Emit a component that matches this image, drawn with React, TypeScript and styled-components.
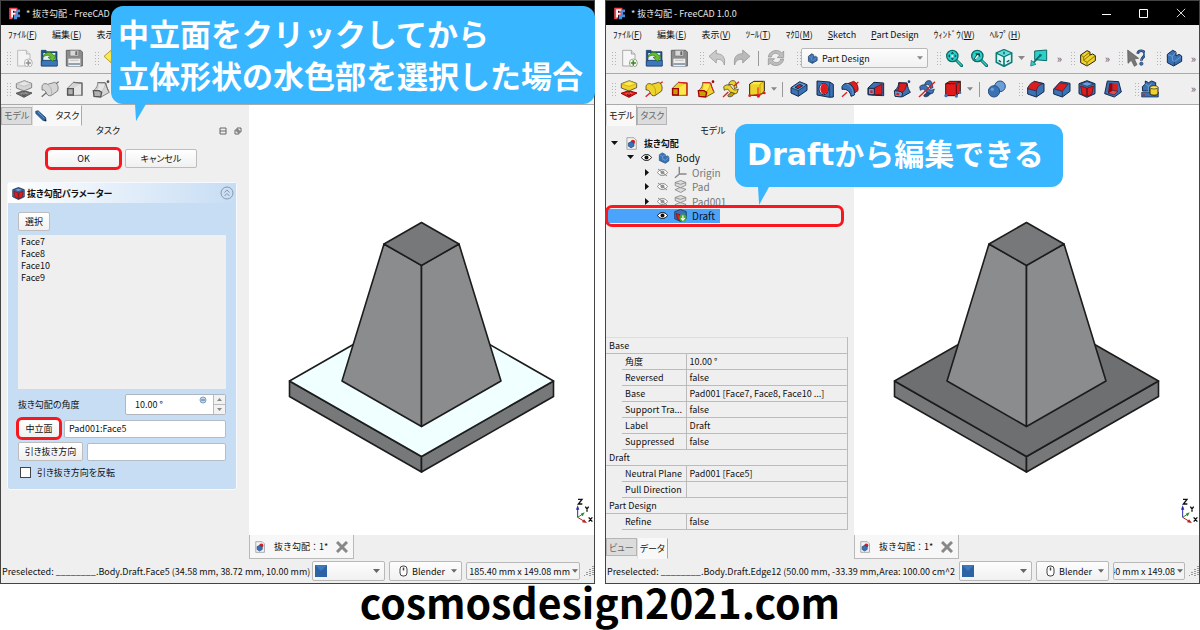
import React from "react";
import styled, { createGlobalStyle, css } from "styled-components";

const ui = '"Noto Sans CJK JP", "Noto Sans", sans-serif';

const Global = createGlobalStyle`
  *, *::before, *::after { box-sizing: border-box; }
  body { margin: 0; background: #fff; }
  button, input, select { font: inherit; color: inherit; }
  svg { display: block; flex: none; }
`;

/* ---------- page ---------- */

const Page = styled.main`
  display: flex;
  flex-direction: column;
  min-height: 100vh;
  font: 9px/13px ${ui};
  font-feature-settings: "palt";
  color: #111;
`;

const Comparison = styled.div`
  flex: 1;
  display: grid;
  grid-template-columns: 1fr 1fr;
  gap: 10px;
`;

const Caption = styled.p`
  margin: 0;
  height: 46px;
  text-align: center;
  font: bold 41px/34px "Noto Sans CJK JP", sans-serif;
  color: #000;
`;

const Shot = styled.section`
  position: relative;
  min-width: 0;
  display: flex;
`;

const Window = styled.div`
  flex: 1;
  min-width: 0;
  display: flex;
  flex-direction: column;
  background: #efefef;
  border: 1px solid #444;
`;

/* ---------- title and menus ---------- */

const TitleBar = styled.header`
  display: flex;
  align-items: center;
  gap: 5px;
  height: 24px;
  padding: 0 0 0 7px;
  background: #000;
  color: #e4e4e4;
  white-space: pre;
`;

const WindowButtons = styled.div`
  margin-left: auto;
  display: flex;
`;

const WindowButton = styled.button`
  width: 37px;
  height: 24px;
  padding: 0;
  border: 0;
  background: none;
  display: grid;
  place-items: center;
`;

const MenuBar = styled.nav`
  display: flex;
  align-items: center;
  gap: 15px;
  height: 18px;
  padding-left: 7px;
  white-space: nowrap;
  overflow: hidden;
`;

const MenuItem = styled.button`
  padding: 0;
  border: 0;
  background: none;
`;

/* ---------- toolbars ---------- */

const ToolBar = styled.div`
  display: flex;
  align-items: center;
  gap: 8px;
  height: 31px;
  padding-left: 5px;
  border-bottom: 1px solid #aaa;
  overflow: hidden;
`;

const ToolGroup = styled.div`
  display: flex;
  align-items: center;
`;

const Grip = styled.span`
  width: 5px;
  height: 14px;
  background-image: radial-gradient(circle, #b4b4b4 1px, transparent 1px);
  background-size: 3px 3px;
`;

const IconSet = styled.div<{ $width: number }>`
  display: grid;
  grid-auto-flow: column;
  grid-auto-columns: 1fr;
  width: ${(p) => p.$width}px;
`;

const ToolButton = styled.button`
  display: grid;
  place-items: center;
  height: 26px;
  padding: 0;
  border: 0;
  background: none;
  &:disabled svg {
    filter: grayscale(1) opacity(0.75);
  }
`;

const Separator = styled.span<{ $width: number }>`
  width: ${(p) => p.$width}px;
  height: 15px;
  background: linear-gradient(#999, #999) center / 1px 100% no-repeat;
`;

const DropArrow = styled.button<{ $width?: number }>`
  width: ${(p) => p.$width ?? 8}px;
  height: 16px;
  padding: 0;
  border: 0;
  background: none;
  display: grid;
  place-items: center;
`;

const More = styled.button`
  width: 10px;
  padding: 0;
  border: 0;
  background: none;
  font-size: 11px;
  line-height: 12px;
  text-align: right;
  color: #555;
`;

const PushRight = styled.span`
  flex: 1;
`;

const Combo = styled.label<{ $width: number; $inset?: number }>`
  flex: none;
  display: flex;
  align-items: center;
  gap: 4px;
  width: ${(p) => p.$width}px;
  height: 20px;
  padding: 0 4px 0 ${(p) => p.$inset ?? 2}px;
  border: 1px solid #b8b8b8;
  border-radius: 2px;
  background: linear-gradient(#fdfdfd, #f1f1f1);
  select {
    flex: 1;
    min-width: 0;
    padding: 0;
    border: 0;
    outline: 0;
    background: none;
    appearance: none;
  }
`;

/* ---------- window body ---------- */

const Body = styled.div`
  flex: 1;
  display: flex;
`;

const SidePanel = styled.aside`
  flex: none;
  width: 248px;
  display: flex;
  flex-direction: column;
`;

const Tabs = styled.div`
  display: flex;
  align-items: center;
  height: 21px;
`;

const Tab = styled.button<{ $active?: boolean }>`
  display: flex;
  align-items: center;
  gap: 8px;
  height: 18px;
  padding: 0 2px;
  border: 1px solid #b5b5b5;
  background: #dcdcdc;
  color: #666;
  ${(p) =>
    p.$active &&
    css`
      height: 21px;
      border-color: #f8f8f8 #aaa #f8f8f8 #ddd;
      background: #f8f8f8;
      color: #111;
    `}
`;

const DockTitle = styled.div`
  display: flex;
  align-items: center;
  height: 10px;
  line-height: 10px;
  > span {
    width: 214px;
    text-align: center;
  }
`;

const DockTools = styled.div`
  display: flex;
  gap: 7px;
  padding-left: 4px;
`;

const marked = css`
  position: relative;
  &::after {
    content: "";
    position: absolute;
    inset: -3px;
    border: 3px solid #f8171f;
    border-radius: 6px;
  }
`;

const Button = styled.button<{ $width: number; $marked?: boolean }>`
  flex: none;
  width: ${(p) => p.$width}px;
  height: 19px;
  padding: 0;
  border: 1px solid #bdbdbd;
  border-radius: 2px;
  background: linear-gradient(#fff, #f0f0f0);
  line-height: 16px;
  ${(p) => p.$marked && marked}
`;

const DialogButtons = styled.div`
  display: flex;
  gap: 5px;
  margin: 13px 0 14px 46px;
`;

const TaskBox = styled.section`
  width: 230px;
  margin-left: 6px;
  border: 1px solid #f6f9fd;
  border-radius: 3px;
  background: #c7ddf4;
`;

const TaskHeader = styled.h2`
  display: flex;
  align-items: center;
  gap: 2px;
  height: 20px;
  margin: 0;
  padding: 0 2px 0 4px;
  background: linear-gradient(90deg, #fff, #c7ddf4);
  font-size: 9px;
  line-height: 13px;
  button {
    margin-left: auto;
    padding: 0;
    border: 0;
    background: none;
  }
`;

const TaskForm = styled.div`
  display: flex;
  flex-direction: column;
  align-items: stretch;
  gap: 4px;
  padding: 9px 10px 10px;
`;

const FaceList = styled.ul`
  height: 154px;
  margin: 0 0 1px;
  padding: 1px 3px;
  list-style: none;
  line-height: 12px;
  background: #efefef;
`;

const Field = styled.div`
  display: flex;
  align-items: center;
  gap: 4px;
  > label:first-child {
    flex: 1;
  }
`;

const TextInput = styled.input`
  flex: 1;
  min-width: 0;
  height: 18px;
  padding: 0 4px;
  border: 1px solid #b4bcc6;
  border-radius: 2px;
  background: #fff;
`;

const SpinBox = styled.div`
  display: flex;
  width: 101px;
  height: 21px;
  border: 1px solid #b0b6be;
  border-radius: 2px;
  background: #fff;
  input {
    flex: 1;
    min-width: 0;
    padding: 0 0 0 9px;
    border: 0;
    background: none;
  }
`;

const Steps = styled.div`
  display: grid;
  width: 12px;
  margin-left: 6px;
  border-left: 1px solid #bbb;
  background: #f2f2f2;
  button {
    display: grid;
    place-items: center;
    padding: 0;
    border: 0;
    background: none;
  }
  button + button {
    border-top: 1px solid #bbb;
  }
`;

const CheckRow = styled.label`
  display: flex;
  align-items: center;
  gap: 6px;
  height: 14px;
  padding-left: 2px;
  input {
    appearance: none;
    width: 11px;
    height: 11px;
    margin: 0;
    border: 1px solid #444;
    background: #fff;
  }
`;

/* ---------- model tree ---------- */

const Tree = styled.ul`
  display: grid;
  grid-template-rows: repeat(6, 1fr);
  height: 87px;
  margin: 0;
  padding: 0;
  list-style: none;
`;

const TreeRow = styled.li<{ $depth: number; $dim?: boolean; $selected?: boolean }>`
  display: flex;
  align-items: center;
  gap: 6px;
  padding-left: ${(p) => 3 + p.$depth * 16}px;
  font-size: 10px;
  color: ${(p) => (p.$dim ? "#777" : "#111")};
  ${(p) =>
    p.$depth === 0 &&
    css`
      font-size: 9px;
      font-weight: bold;
    `}
  ${(p) =>
    p.$selected &&
    css`
      position: relative;
      background: linear-gradient(#4ba3fb, #4ba3fb) left / 114px 100% no-repeat;
      &::after {
        content: "";
        position: absolute;
        inset: -4px 10px -4px -1px;
        border: 3px solid #f8171f;
        border-radius: 7px;
      }
    `}
`;

const TreeSlot = styled.span<{ $width: number }>`
  display: grid;
  place-items: center;
  width: ${(p) => p.$width}px;
`;

const Properties = styled.table`
  width: 242px;
  margin-top: auto;
  border-collapse: collapse;
  border-right: 1px solid #bbb;
  border-top: 1px solid #ddd;
  table-layout: fixed;
  td, th {
    height: 16px;
    padding: 0 0 0 3px;
    border-bottom: 1px solid #bbb;
    font-weight: normal;
    text-align: left;
    line-height: 14px;
    white-space: nowrap;
  }
  td:first-child { border: 0; }
  td:last-child { border-left: 1px solid #bbb; }
`;

const BottomTabs = styled(Tabs)`
  margin-top: 8px;
  align-items: flex-start;
`;

/* ---------- 3D view ---------- */

const ViewArea = styled.div`
  flex: 1;
  min-width: 0;
  display: flex;
  flex-direction: column;
`;

const Viewport = styled.div`
  position: relative;
  flex: 1;
  display: grid;
  place-items: center;
  padding-top: 53px;
  background: #fff;
`;

const Axes = styled.svg`
  position: absolute;
  right: 1px;
  bottom: 9px;
`;

const DocTab = styled.div`
  display: flex;
  align-items: center;
  align-self: flex-start;
  gap: 8px;
  height: 24px;
  padding: 0 5px 0 4px;
  border: 1px solid #b9b9b9;
  border-top: 0;
  background: #f7f7f7;
  font-feature-settings: normal;
  button {
    padding: 0;
    border: 0;
    background: none;
  }
`;

const StatusBar = styled.footer`
  display: flex;
  align-items: center;
  gap: 4px;
  height: 24px;
  padding-left: 1px;
  white-space: nowrap;
`;

const StatusText = styled.span`
  flex: 1;
  min-width: 0;
  display: flex;
  justify-content: space-between;
`;

const SizeButton = styled.button<{ $width: number }>`
  flex: none;
  display: flex;
  align-items: center;
  justify-content: flex-end;
  gap: 2px;
  width: ${(p) => p.$width}px;
  height: 18px;
  padding: 0 1px 0 0;
  border: 1px solid #b8b8b8;
  border-radius: 2px;
  background: #f4f4f4;
  white-space: nowrap;
  span {
    display: flex;
    justify-content: flex-end;
    min-width: 0;
    overflow: hidden;
  }
`;

/* ---------- callouts ---------- */

const Callout = styled.div<{ $tail: number; $drop: number }>`
  position: absolute;
  z-index: 2;
  border-radius: 12px;
  background: #38b6ff;
  color: #fff;
  white-space: nowrap;
  font-feature-settings: normal;
  &::after {
    content: "";
    position: absolute;
    left: ${(p) => p.$tail}px;
    top: 100%;
    width: 11px;
    height: ${(p) => p.$drop}px;
    background: #38b6ff;
    clip-path: polygon(0 0, 100% 0, 10% 100%);
  }
`;

const SelectionCallout = styled(Callout)`
  left: 111px;
  right: 0;
  top: 6px;
  padding: 6px 7px 8px;
  font: bold 31px/42px ${ui};
`;

const EditCallout = styled(Callout)`
  left: 130px;
  top: 124px;
  padding: 9px 12px 11px;
  width: 328px;
  font: bold 30px/43px "DejaVu Sans", "Noto Sans CJK JP", sans-serif;
`;

/* ---------- icons ---------- */

const Y = "#edd32b";
const YL = "#fce94f";
const YD = "#c4a000";
const B = "#3b72b4";
const BL = "#6a9fd8";
const BD = "#204a87";
const R = "#e01b1b";
const RD = "#a40000";
const K = "#2a2118";

const art: Record<string, React.ReactNode> = {
  newDoc: (
    <>
      <path d="M8 4h26l11 11v36H8z" fill="#f6f6f6" stroke="#8a8a8a" strokeWidth="2" />
      <path d="M34 4v11h11" fill="#ddd" stroke="#8a8a8a" strokeWidth="2" />
      <circle cx="40" cy="42" r="12" fill="#fff" stroke="#6d7f62" strokeWidth="2" />
      <path d="M40 34v16M32 42h16" stroke="#3c8a1c" strokeWidth="5" />
    </>
  ),
  open: (
    <>
      <path d="M4 4h14l3 4h30v43H4z" fill="#1d4e86" stroke="#173b66" strokeWidth="2" />
      <path d="M10 12h36v22H10z" fill="#e8eef4" />
      <path d="M4 37l8-3h40v17H4z" fill="#3b78bb" stroke="#173b66" strokeWidth="2" />
      <path d="M7 27C13 7 34 5 40 19l8-1-9 20-15-13 8-1c-5-8-16-7-25 3z" fill="#63bf2d" stroke="#2d6d0c" strokeWidth="2" />
    </>
  ),
  save: (
    <>
      <path d="M4 4h43l5 5v42H4z" fill="#8d8d8d" stroke="#666" strokeWidth="3" />
      <path d="M15 4h26v17H15z" fill="#d8d8d8" stroke="#777" strokeWidth="2" />
      <path d="M31 7h6v11h-6z" fill="#666" />
      <path d="M10 29h36v22H10z" fill="#eee" />
      <path d="M10 42h36v6H10z" fill="#8fa3b8" />
      <path d="M15 34h26" stroke="#aaa" strokeWidth="2" />
    </>
  ),
  undo: <path d="M3 22L25 3v11c20 0 28 12 24 34-3-13-10-18-24-17v11z" fill="#c9c9c9" stroke="#8c8c8c" strokeWidth="2" />,
  undoOn: <path d="M3 22L25 3v11c20 0 28 12 24 34-3-13-10-18-24-17v11z" fill={YL} stroke="#8f7500" strokeWidth="2" />,
  redo: <path d="M51 22L29 3v11C9 14 1 26 5 48c3-13 10-18 24-17v11z" fill="#b9b9b9" stroke="#8c8c8c" strokeWidth="2" />,
  refresh: (
    <>
      <path d="M4 24C6 4 34-2 44 12l6-6v20H31l6-7C30 9 15 12 13 24z" fill="#bdbdbd" stroke="#8c8c8c" strokeWidth="2" />
      <path d="M50 30c-2 20-30 26-40 12l-6 6V29h19l-6 6c7 10 22 7 24-5z" fill="#bdbdbd" stroke="#8c8c8c" strokeWidth="2" />
    </>
  ),
  fitAll: (
    <>
      <path d="M33 33l17 17" stroke="#0b6b66" strokeWidth="9" strokeLinecap="round" />
      <path d="M34 34l15 15" stroke="#2ad0c9" strokeWidth="4" strokeLinecap="round" />
      <circle cx="22" cy="21" r="17" fill="#2ad0c9" stroke="#0b6b66" strokeWidth="4" />
      <path d="M22 8l5 6H17zM22 34l5-6H17zM9 21l6-5v10zM35 21l-6-5v10z" fill="#0c4644" />
      <circle cx="22" cy="21" r="3" fill="#fff" />
    </>
  ),
  fitSel: (
    <>
      <path d="M33 33l17 17" stroke="#0b6b66" strokeWidth="9" strokeLinecap="round" />
      <path d="M34 34l15 15" stroke="#2ad0c9" strokeWidth="4" strokeLinecap="round" />
      <circle cx="22" cy="21" r="17" fill="#2ad0c9" stroke="#0b6b66" strokeWidth="4" />
      <path d="M11 30l8-12-3-5h13l2 11-6-2-8 11z" fill="#0c4644" />
      <path d="M14 29l8-11 5 2-9 11z" fill="#e6fffd" />
    </>
  ),
  iso: (
    <>
      <path d="M27 2l23 10v28L27 52 4 40V12z" fill="#dff8f6" stroke="#0e7d78" strokeWidth="5" />
      <path d="M4 12l23 11 23-11M27 23v29" fill="none" stroke="#0e7d78" strokeWidth="5" />
      <path d="M27 4l20 8-20 9L8 12z" fill="#5fe0da" />
      <path d="M11 34l7 5M35 39l8-5M27 8v8" stroke="#0b5551" strokeWidth="4" />
    </>
  ),
  link: (
    <>
      <path d="M14 6l36-3v32l-36-3z" fill="#2ad0c9" stroke="#0b6b66" strokeWidth="3" />
      <path d="M30 20L8 44" stroke="#0b6b66" strokeWidth="5" />
      <path d="M2 51l2-17 14 12z" fill="#2ad0c9" stroke="#0b6b66" strokeWidth="2" />
      <circle cx="31" cy="19" r="4" fill="#0b6b66" />
    </>
  ),
  partYellow: (
    <>
      <path d="M5 18L24 5l9 4v9l8-3 8 5v15L24 51 5 41z" fill={Y} stroke={K} strokeWidth="3" />
      <path d="M5 18l9 6 19-15M14 24v10l10 6v11M24 40l25-20M14 34l19-16" fill="none" stroke="#8f7500" strokeWidth="3" />
    </>
  ),
  partBlue: (
    <>
      <path d="M7 16L23 4l10 5v12l9-5 8 5v16L26 51 7 41z" fill={B} stroke="#12294b" strokeWidth="3" />
      <path d="M9 17l13 5 10-12M22 22v12l6 4 20-15" fill="none" stroke={BL} strokeWidth="3" />
      <path d="M28 38v12" stroke="#12294b" strokeWidth="2" />
    </>
  ),
  help: (
    <>
      <path d="M32 14c2-12 22-12 21 2 0 9-10 9-10 19" fill="none" stroke="#1d3a66" strokeWidth="8" />
      <path d="M32 14c2-12 22-12 21 2 0 9-10 9-10 19" fill="none" stroke="#5a8dc8" strokeWidth="3" />
      <circle cx="43" cy="44" r="5" fill="#3b72b4" stroke="#1d3a66" strokeWidth="2" />
      <path d="M2 3l33 25-13 2 8 17-8 5-9-18-10 9z" fill="#777" stroke="#555" strokeWidth="2" />
    </>
  ),
  pad: (
    <>
      <path d="M3 40l23-8 25 7-24 13z" fill={R} stroke={RD} strokeWidth="3" />
      <path d="M16 41l11-4 11 3-11 6z" fill="#f3dede" />
      <path d="M27 30v13M20 40l7 8 7-8" fill="none" stroke={RD} strokeWidth="4" />
      <path d="M4 11L28 2l22 8v13L27 33 4 24z" fill={Y} stroke={K} strokeWidth="2" />
      <path d="M5 12L28 3l21 8-22 8z" fill={YL} stroke={YD} strokeWidth="2" />
    </>
  ),
  revolve: (
    <>
      <path d="M43 13l10-8" stroke={R} strokeWidth="4" />
      <path d="M3 19c2-9 11-10 17-6l21-6c8 3 13 13 9 26L30 47c-8 2-13-3-15-10-3-6-7-8-12-7z" fill={Y} stroke={K} strokeWidth="2" />
      <path d="M20 14c9 5 14 17 11 32" fill="none" stroke={YD} strokeWidth="3" />
      <path d="M2 50l14-12" stroke={R} strokeWidth="4" />
    </>
  ),
  loft: (
    <>
      <path d="M4 25L22 7l26 2v37H24l-20-1z" fill={Y} stroke={K} strokeWidth="2" />
      <path d="M22 25L45 11v31l-23 3z" fill={YL} />
      <path d="M22 7l26 2v38" fill="none" stroke={R} strokeWidth="4" />
      <path d="M5 26h17v19H5z" fill={YD} stroke={RD} strokeWidth="4" />
    </>
  ),
  pipe: (
    <>
      <path d="M7 30c7-7 10-13 10-22l25 1c2 14 6 22 10 28L29 50 7 47z" fill={Y} stroke={K} strokeWidth="2" />
      <path d="M18 9c1 12-1 20-8 25l18 2c8-9 11-17 12-26z" fill={YL} stroke={YD} strokeWidth="2" />
      <path d="M4 32h17l8 5-3 14-20-2z" fill={YD} stroke={RD} strokeWidth="4" />
      <path d="M17 8h22l11 26" fill="none" stroke={R} strokeWidth="3" />
      <circle cx="48" cy="5" r="4" fill={RD} />
    </>
  ),
  helix: (
    <>
      <path d="M5 20c9-9 20-6 24 2s12 10 20 5l-4 12c-10 6-19 1-23-6s-9-6-15-2z" fill={Y} stroke={K} strokeWidth="2" />
      <path d="M20 14c1-12 15-16 21-8l4 17-8 3c0-10-5-14-17-12z" fill={Y} stroke={K} strokeWidth="2" />
      <path d="M19 44c-8 8 14 10 18-4l-9-3z" fill={YD} stroke={K} strokeWidth="2" />
      <path d="M3 51l16-15M36 18L51 5" stroke={R} strokeWidth="4" />
    </>
  ),
  box: (
    <>
      <path d="M5 12L18 4h31v30L36 46H5z" fill={Y} stroke={K} strokeWidth="3" />
      <path d="M7 13L18 6h28l-10 7z" fill={YL} />
      <path d="M36 13v31M36 13l11-8" fill="none" stroke={YD} strokeWidth="3" />
      <path d="M30 22v22M6 47l22-3 20-4" fill="none" stroke={R} strokeWidth="3" />
      <circle cx="5" cy="47" r="4" fill={R} /><circle cx="31" cy="48" r="5" fill={R} /><circle cx="49" cy="39" r="4" fill={R} />
    </>
  ),
  pocket: (
    <>
      <path d="M3 23L29 5l22 9v17L25 49 3 39z" fill={B} stroke="#12294b" strokeWidth="3" />
      <path d="M3 23l22 9 26-18M25 32v17" fill="none" stroke="#12294b" strokeWidth="2" />
      <path d="M6 23L29 8l18 7-22 14z" fill={BL} />
      <path d="M15 22l14-9 9 4-14 9z" fill={R} stroke="#12294b" strokeWidth="3" />
    </>
  ),
  hole: (
    <>
      <path d="M3 3l38 3 11 7v38l-11 1-38-7z" fill={B} stroke="#12294b" strokeWidth="3" />
      <path d="M41 6v46" stroke="#12294b" strokeWidth="2" />
      <ellipse cx="23" cy="27" rx="14" ry="17" fill="#fff" stroke="#12294b" strokeWidth="3" />
      <path d="M25 10c-13 2-17 24-4 33 19 2 20-28 4-33z" fill={R} />
    </>
  ),
  groove: (
    <>
      <path d="M42 14l10-8" stroke={R} strokeWidth="4" />
      <path d="M22 10l16-6c10 4 15 16 13 28l-9 6z" fill={R} stroke="#6d0000" strokeWidth="2" />
      <path d="M3 20c3-9 13-12 23-8 11 7 17 20 14 33l-10 4c-2-14-12-23-27-21z" fill={B} stroke="#12294b" strokeWidth="3" />
      <path d="M17 12c13 5 20 17 19 33" fill="none" stroke={BL} strokeWidth="3" />
      <path d="M3 50l15-13" stroke={R} strokeWidth="4" />
    </>
  ),
  subLoft: (
    <>
      <path d="M3 24L21 7l29 2v38l-28-1-19-2z" fill={B} stroke="#12294b" strokeWidth="3" />
      <path d="M22 24L45 12v31l-23 1z" fill={R} stroke="#6d0000" strokeWidth="2" />
      <path d="M4 25h18v19H4z" fill={BL} stroke="#12294b" strokeWidth="3" />
      <path d="M10 31h7v8h-7z" fill={R} />
    </>
  ),
  subPipe: (
    <>
      <path d="M7 30c7-7 10-13 10-22l25 1c2 14 6 22 10 28L29 50 7 47z" fill={B} stroke="#12294b" strokeWidth="3" />
      <path d="M18 9c1 12-1 20-8 25l18 4c9-9 13-18 13-28z" fill={R} stroke="#6d0000" strokeWidth="2" />
      <path d="M4 32l17 2 8 5-3 12-20-2z" fill={BL} stroke="#12294b" strokeWidth="3" />
      <path d="M10 38l10 2-2 6-8-1z" fill={R} />
      <circle cx="48" cy="5" r="4" fill={BD} />
    </>
  ),
  subHelix: (
    <>
      <path d="M5 20c9-9 20-6 24 2s12 10 20 5l-4 12c-10 6-19 1-23-6s-9-6-15-2z" fill={B} stroke="#12294b" strokeWidth="2" />
      <path d="M20 14c1-12 15-16 21-8l4 17-8 3c0-10-5-14-17-12z" fill={B} stroke="#12294b" strokeWidth="2" />
      <path d="M19 44c-8 8 14 10 18-4l-9-3z" fill={BD} stroke="#12294b" strokeWidth="2" />
      <path d="M3 51l18-17L51 5" fill="none" stroke={R} strokeWidth="4" />
    </>
  ),
  subBox: (
    <>
      <path d="M5 11L17 4h32v31L37 47H5z" fill={R} stroke={K} strokeWidth="3" />
      <path d="M5 11h32v36M37 11l12-7" fill="none" stroke="#6d0000" strokeWidth="3" />
      <circle cx="6" cy="47" r="5" fill={B} /><circle cx="37" cy="48" r="5" fill={B} /><circle cx="48" cy="38" r="4" fill={B} />
      <circle cx="37" cy="11" r="4" fill={BD} />
    </>
  ),
  bool: (
    <>
      <circle cx="36" cy="19" r="16" fill={BL} stroke="#274d80" strokeWidth="3" />
      <circle cx="18" cy="34" r="17" fill={B} stroke="#274d80" strokeWidth="3" />
      <circle cx="13" cy="28" r="5" fill={BL} />
    </>
  ),
  fillet: (
    <>
      <path d="M2 23L22 4l29 7v24L28 51 2 42z" fill={B} stroke="#12294b" strokeWidth="3" />
      <path d="M2 26C7 10 17 5 25 5l25 6c-12 2-19 8-22 22z" fill={R} stroke="#12294b" strokeWidth="2" />
      <path d="M28 33v18" stroke="#12294b" strokeWidth="2" />
    </>
  ),
  chamfer: (
    <>
      <path d="M2 27L23 5l28 5v24L28 51 2 42z" fill={B} stroke="#12294b" strokeWidth="3" />
      <path d="M4 27L20 8l25 5-17 21z" fill={R} stroke="#12294b" strokeWidth="2" />
      <path d="M28 34v17" stroke="#12294b" strokeWidth="2" />
    </>
  ),
  draft: (
    <>
      <path d="M27 2l24 9v30L27 52 3 41V11z" fill={B} stroke="#12294b" strokeWidth="3" />
      <path d="M7 12l20-7 20 7-20 7z" fill={BL} stroke="#12294b" strokeWidth="2" />
      <path d="M8 18l18 6v25L12 42zM46 18l-18 6v25l14-7z" fill={R} stroke="#6d0000" strokeWidth="2" />
    </>
  ),
  thickness: (
    <>
      <path d="M10 3l34 2 8 31-21 15L2 41z" fill={B} stroke="#12294b" strokeWidth="3" />
      <path d="M16 9l10 1v22L12 39z" fill={RD} />
      <path d="M26 9l16 2v23l-16-3z" fill={R} />
      <path d="M12 39l14-8 16 3-12 11z" fill="#f04646" stroke="#12294b" strokeWidth="2" />
    </>
  ),
  shapeBinder: (
    <>
      <path d="M2 37h50v14H2z" fill={B} stroke="#12294b" strokeWidth="2" />
      <path d="M4 20l9-8V3l10 5 9-5 12 5v25H5z" fill={B} stroke="#12294b" strokeWidth="3" />
      <path d="M13 12l9 6 10-7M22 18v18" fill="none" stroke={BL} strokeWidth="3" />
      <path d="M27 22v20c5 5 20 5 24 0V22z" fill={Y} stroke={K} strokeWidth="3" />
      <ellipse cx="39" cy="22" rx="12" ry="5" fill={YL} stroke={K} strokeWidth="2" />
      <path d="M4 46h8M8 42v8" stroke={R} strokeWidth="4" />
    </>
  ),
  document: (
    <>
      <path d="M8 3h29l10 10v38H8z" fill="#f3f3f3" stroke="#888" strokeWidth="3" />
      <circle cx="33" cy="20" r="9" fill={R} />
      <path d="M14 25l11-5 12 5v13l-12 7-11-7z" fill={B} stroke={BD} strokeWidth="3" />
    </>
  ),
  body: (
    <>
      <path d="M6 12l13-8 14 7v11l8-5 8 5v18L33 51 6 38z" fill={B} stroke={BD} strokeWidth="3" />
      <path d="M8 13l13 7v12l12 6 15-15M21 20l11-8" fill="none" stroke={BL} strokeWidth="4" />
    </>
  ),
  origin: <path d="M22 3v30h30M22 33L4 49" fill="none" stroke="#888" strokeWidth="6" />,
  padGray: (
    <g fill="#ddd" stroke="#777" strokeWidth="3">
      <path d="M4 40l22-9 24 8-22 13z" />
      <path d="M5 10L28 2l21 8v12L27 32 5 23z" />
      <path d="M5 11l22 7 22-7" fill="none" />
    </g>
  ),
  draftTip: (
    <>
      <path d="M27 2l24 9v30L27 52 3 41V11z" fill={B} stroke="#12294b" strokeWidth="3" />
      <path d="M9 18l16 6v24L13 41z" fill={R} stroke="#6d0000" strokeWidth="2" />
      <circle cx="37" cy="37" r="15" fill="#3fae2a" />
      <path d="M37 27v18M29 38l8 8 8-8" fill="none" stroke="#fff" strokeWidth="5" />
    </>
  ),
  logo: (
    <>
      <path d="M26 10h24v12h-8v9h8v12H38v8H24z" fill="#4a8fe0" />
      <path d="M5 3h34v12H19v8h15v11H19v17H5z" fill="#f04650" />
      <path d="M13 9h21v7H21v9h10v6H21v13h-8z" fill="#fff" />
    </>
  ),
  pencil: (
    <>
      <path d="M3 6l11-3 34 31 2 16-15-4L4 16z" fill="#2f66a6" stroke="#173b66" strokeWidth="3" />
      <path d="M12 8l30 29" stroke="#6a9fd8" strokeWidth="4" />
      <path d="M50 50l-9-2 6-7z" fill="#111" />
    </>
  ),
};

const Icon = ({ name, size = 18 }: { name: string; size?: number }) => (
  <svg width={size} height={size} viewBox="0 0 54 54" aria-hidden="true">
    {art[name]}
  </svg>
);

const Down = ({ color = "#666", w = 7 }: { color?: string; w?: number }) => (
  <svg width={w} height="4" viewBox="0 0 7 4" aria-hidden="true">
    <path d="M0 0h7L3.5 4z" fill={color} />
  </svg>
);

const Eye = ({ hidden }: { hidden?: boolean }) => (
  <svg width="11" height="9" viewBox="0 0 22 18" aria-hidden="true">
    <path d="M1 9c5-8 15-8 20 0-5 8-15 8-20 0z" fill="#fff" stroke={hidden ? "#888" : "#111"} strokeWidth="2" />
    <circle cx="11" cy="9" r="4" fill={hidden ? "#999" : "#111"} />
    {hidden && <path d="M2 2l18 14" stroke="#888" strokeWidth="2" />}
  </svg>
);

const Mouse = () => (
  <svg width="9" height="12" viewBox="0 0 18 24" aria-hidden="true">
    <rect x="2" y="2" width="14" height="20" rx="6" fill="#fff" stroke="#444" strokeWidth="2" />
    <path d="M9 5v6" stroke="#444" strokeWidth="3" />
  </svg>
);

const Close = ({ size, color, weight }: { size: number; color: string; weight: number }) => (
  <svg width={size} height={size} viewBox="0 0 12 12" aria-hidden="true">
    <path d="M1 1l10 10M11 1L1 11" stroke={color} strokeWidth={weight} />
  </svg>
);

/* ---------- shared window parts ---------- */

const Tools = ({ names, width, disabled = [] }: { names: string[]; width: number; disabled?: string[] }) => (
  <IconSet $width={width}>
    {names.map((n) => (
      <ToolButton key={n} aria-label={n} disabled={disabled.includes(n)}>
        <Icon name={n} />
      </ToolButton>
    ))}
  </IconSet>
);

const Menu = ({ label, hot }: { label: string; hot: string }) => (
  <MenuItem>
    {label}(<u>{hot}</u>)
  </MenuItem>
);

const Solid = ({ plate }: { plate: string }) => (
  <svg width="267" height="252" viewBox="0 0 267 252" role="img" aria-label="solid">
    <g stroke="#1c1c1c" strokeWidth="1.6" strokeLinejoin="round">
      <path d="M1.5 160v15.500L133.500 251v-15.500z" fill="#77787a" />
      <path d="M265.500 160v15.500L133.500 251v-15.500z" fill="#77787a" />
      <path d="M1.500 160L133.500 84.500 265.500 160 133.500 235.500z" fill={plate} />
      <path d="M96 23L54 160l79.500 45.500V44z" fill="#8b8c8e" />
      <path d="M171 23l42 137-79.500 45.500V44z" fill="#8b8c8e" />
      <path d="M133.500 1.500L171 23l-37.500 21.500L96 23z" fill="#77787a" />
    </g>
  </svg>
);

const View = ({ plate }: { plate: string }) => (
  <ViewArea>
    <Viewport>
      <Solid plate={plate} />
      <Axes width="18" height="28" viewBox="0 0 54 84" aria-hidden="true">
        <path d="M8 58V28" stroke="#2a2ab0" strokeWidth="3" />
        <path d="M8 22l5 13H3z" fill="#2a2ab0" />
        <path d="M8 58l14-9" stroke="#228b22" strokeWidth="3" />
        <path d="M29 43l-6 12-6-8z" fill="#228b22" />
        <path d="M8 58l18 11" stroke="#b22222" strokeWidth="3" />
        <path d="M36 75l-15-2 6-9z" fill="#b22222" />
        <g fill="none" stroke="#111" strokeWidth="4">
          <path d="M9 4h12L10 18h12M31 26l5 7 5-7M36 32v9M41 58l11 13M52 58L41 71" />
        </g>
      </Axes>
    </Viewport>
    <DocTab>
      <Icon name="document" size={12} />
      <span>抜き勾配：1*</span>
      <button aria-label="close">
        <Close size={12} color="#888" weight={3} />
      </button>
    </DocTab>
  </ViewArea>
);

const Status = ({ text, area, size, width }: { text: string; area?: string; size: string; width: number }) => (
  <StatusBar>
    <StatusText>
      <span>{text}</span>
      {area && <span>{area}</span>}
    </StatusText>
    <Combo $width={73}>
      <svg width="12" height="12" viewBox="0 0 12 12" aria-hidden="true">
        <path d="M0 0h12v12H0z" fill="#2d62a5" />
        <path d="M0 0h12L6 6z" fill="#3f79bd" />
      </svg>
      <select aria-label="notification">
        <option></option>
      </select>
      <Down />
    </Combo>
    <Combo $width={73} $inset={9}>
      <Mouse />
      <select aria-label="navigation style">
        <option>Blender</option>
      </select>
      <Down w={6} />
    </Combo>
    <SizeButton $width={width}>
      <span>{size}</span>
      <Down w={6} />
    </SizeButton>
    <svg width="10" height="10" viewBox="0 0 10 10" aria-hidden="true">
      <path d="M9 0v10M6 3v7M3 6v4M0 9v1" stroke="#999" strokeWidth="2" strokeDasharray="1 1" />
    </svg>
  </StatusBar>
);

const shapes = ["pad", "revolve", "loft", "pipe", "helix", "box"];
const cuts = ["pocket", "hole", "groove", "subLoft", "subPipe", "subHelix", "subBox"];

/* ---------- windows ---------- */

const TaskWindow = () => (
  <Window>
    <TitleBar>
      <Icon name="logo" size={13} />
      <span>* 抜き勾配 - FreeCAD</span>
    </TitleBar>
    <MenuBar>
      <Menu label="ﾌｧｲﾙ" hot="F" />
      <Menu label="編集" hot="E" />
      <MenuItem>表示</MenuItem>
    </MenuBar>
    <ToolBar>
      <ToolGroup>
        <Grip />
        <Tools names={["newDoc", "open", "save"]} width={75} disabled={["newDoc"]} />
      </ToolGroup>
      <ToolGroup>
        <Grip />
        <Tools names={["undoOn"]} width={25} />
      </ToolGroup>
    </ToolBar>
    <ToolBar>
      <ToolGroup>
        <Grip />
        <Tools names={shapes.slice(0, 4)} width={103} disabled={shapes} />
      </ToolGroup>
    </ToolBar>
    <Body>
      <SidePanel>
        <Tabs>
          <Tab>モデル</Tab>
          <Tab $active>
            <Icon name="pencil" size={12} />
            タスク
          </Tab>
        </Tabs>
        <DockTitle>
          <span>タスク</span>
          <DockTools>
            <svg width="8" height="8" viewBox="0 0 8 8" aria-hidden="true">
              <path d="M1 1h6v6H1zM1 4h6" fill="none" stroke="#666" />
            </svg>
            <svg width="8" height="8" viewBox="0 0 8 8" aria-hidden="true">
              <path d="M3 1h4v4H3zM1 3h4v4H1z" fill="none" stroke="#666" />
            </svg>
          </DockTools>
        </DockTitle>
        <DialogButtons>
          <Button $width={73} $marked>OK</Button>
          <Button $width={72}>キャンセル</Button>
        </DialogButtons>
        <TaskBox>
          <TaskHeader>
            <Icon name="draft" size={13} />
            抜き勾配パラメーター
            <button aria-label="collapse">
              <svg width="14" height="14" viewBox="0 0 14 14" fill="none" stroke="#8998a8">
                <circle cx="7" cy="7" r="6" />
                <path d="M4.500 6.500L7 4l2.500 2.500M4.500 10L7 7.500 9.500 10" />
              </svg>
            </button>
          </TaskHeader>
          <TaskForm>
            <Field>
              <Button $width={32}>選択</Button>
            </Field>
            <FaceList>
              {["Face7", "Face8", "Face10", "Face9"].map((f) => (
                <li key={f}>{f}</li>
              ))}
            </FaceList>
            <Field>
              <label htmlFor="angle">抜き勾配の角度</label>
              <SpinBox>
                <input id="angle" defaultValue="10.00 °" />
                <svg width="8" height="10" viewBox="0 0 8 10" aria-hidden="true">
                  <circle cx="4" cy="5" r="3" fill="#c5d5e8" stroke="#7f9fc4" />
                  <path d="M2 5h4" stroke="#4c76aa" />
                </svg>
                <Steps>
                  <button aria-label="up">
                    <svg width="5" height="3" viewBox="0 0 5 3"><path d="M0 3h5L2.500 0z" fill="#888" /></svg>
                  </button>
                  <button aria-label="down">
                    <svg width="5" height="3" viewBox="0 0 5 3"><path d="M0 0h5L2.500 3z" fill="#888" /></svg>
                  </button>
                </Steps>
              </SpinBox>
            </Field>
            <Field>
              <Button $width={42} $marked>中立面</Button>
              <TextInput aria-label="中立面" defaultValue="Pad001:Face5" />
            </Field>
            <Field>
              <Button $width={65}>引き抜き方向</Button>
              <TextInput aria-label="引き抜き方向" />
            </Field>
            <CheckRow>
              <input type="checkbox" />
              引き抜き方向を反転
            </CheckRow>
          </TaskForm>
        </TaskBox>
      </SidePanel>
      <View plate="#f0ffff" />
    </Body>
    <Status
      text="Preselected: ________.Body.Draft.Face5 (34.58 mm, 38.72 mm, 10.00 mm)"
      size="185.40 mm x 149.08 mm"
      width={114}
    />
  </Window>
);

type Prop = [string, string?];
const properties: Prop[] = [
  ["Base"],
  ["角度", "10.00 °"],
  ["Reversed", "false"],
  ["Base", "Pad001 [Face7, Face8, Face10 ...]"],
  ["Support Tra...", "false"],
  ["Label", "Draft"],
  ["Suppressed", "false"],
  ["Draft"],
  ["Neutral Plane", "Pad001 [Face5]"],
  ["Pull Direction", ""],
  ["Part Design"],
  ["Refine", "false"],
];

const Expander = ({ open }: { open?: boolean }) => (
  <svg width="7" height="7" viewBox="0 0 7 7" aria-hidden="true">
    <path d={open ? "M0 1h7L3.500 5z" : "M2 0v7l4-3.500z"} fill="#111" />
  </svg>
);

const ModelWindow = () => (
  <Window>
    <TitleBar>
      <Icon name="logo" size={13} />
      <span>* 抜き勾配 - FreeCAD 1.0.0</span>
      <WindowButtons>
        <WindowButton aria-label="minimize">
          <svg width="9" height="9" viewBox="0 0 9 9"><path d="M0 5.500h9" stroke="#fff" /></svg>
        </WindowButton>
        <WindowButton aria-label="maximize">
          <svg width="9" height="9" viewBox="0 0 9 9"><path d="M.5.5h8v8h-8z" fill="none" stroke="#fff" /></svg>
        </WindowButton>
        <WindowButton aria-label="close">
          <Close size={10} color="#fff" weight={1} />
        </WindowButton>
      </WindowButtons>
    </TitleBar>
    <MenuBar>
      <Menu label="ﾌｧｲﾙ" hot="F" />
      <Menu label="編集" hot="E" />
      <Menu label="表示" hot="V" />
      <Menu label="ﾂｰﾙ" hot="T" />
      <Menu label="ﾏｸﾛ" hot="M" />
      <MenuItem><u>S</u>ketch</MenuItem>
      <MenuItem><u>P</u>art Design</MenuItem>
      <Menu label="ｳｨﾝﾄﾞｳ" hot="W" />
      <Menu label="ﾍﾙﾌﾟ" hot="H" />
    </MenuBar>
    <ToolBar>
      <ToolGroup>
        <Grip />
        <Tools names={["newDoc", "open", "save"]} width={75} />
      </ToolGroup>
      <ToolGroup>
        <Grip />
        <Tools names={["undo", "redo"]} width={50} />
        <Separator $width={9} />
        <Tools names={["refresh"]} width={25} />
      </ToolGroup>
      <ToolGroup>
        <Grip />
        <Combo $width={127} $inset={5}>
          <Icon name="partBlue" size={11} />
          <select aria-label="workbench">
            <option>Part Design</option>
          </select>
          <Down color="#888" w={6} />
        </Combo>
      </ToolGroup>
      <ToolGroup>
        <Grip />
        <Tools names={["fitAll", "fitSel", "iso"]} width={75} />
        <DropArrow $width={10} aria-label="views"><Down color="#888" /></DropArrow>
        <Tools names={["link"]} width={26} />
        <More>»</More>
      </ToolGroup>
      <ToolGroup>
        <Grip />
        <Tools names={["partYellow"]} width={25} />
        <More>»</More>
      </ToolGroup>
      <ToolGroup>
        <Grip />
        <Tools names={["help"]} width={25} />
      </ToolGroup>
      <ToolGroup>
        <Grip />
        <Tools names={["partBlue"]} width={25} />
        <More>»</More>
      </ToolGroup>
    </ToolBar>
    <ToolBar>
      <ToolGroup>
        <Grip />
        <Tools names={shapes} width={154} />
        <DropArrow aria-label="additive primitives"><Down color="#888" w={6} /></DropArrow>
        <Separator $width={8} />
        <Tools names={cuts} width={180} />
        <DropArrow aria-label="subtractive primitives"><Down color="#888" w={6} /></DropArrow>
        <Separator $width={10} />
        <Tools names={["bool"]} width={26} />
      </ToolGroup>
      <ToolGroup>
        <Grip />
        <Tools names={["fillet", "chamfer", "draft", "thickness"]} width={103} />
      </ToolGroup>
      <ToolGroup>
        <Grip />
        <Tools names={["shapeBinder"]} width={22} />
      </ToolGroup>
      <PushRight />
      <EndCell>
        <More>»</More>
      </EndCell>
    </ToolBar>
    <Body>
      <SidePanel>
        <Tabs>
          <Tab $active>モデル</Tab>
          <Tab>タスク</Tab>
        </Tabs>
        <DockTitle>
          <span>モデル</span>
        </DockTitle>
        <Tree>
          <TreeRow $depth={0}>
            <TreeSlot $width={10}><Expander open /></TreeSlot>
            <Icon name="document" size={13} />
            抜き勾配
          </TreeRow>
          <TreeRow $depth={1}>
            <TreeSlot $width={10}><Expander open /></TreeSlot>
            <Eye />
            <TreeSlot $width={12}><Icon name="body" size={12} /></TreeSlot>
            Body
          </TreeRow>
          {[["Origin", "origin"], ["Pad", "padGray"], ["Pad001", "padGray"]].map(([name, icon]) => (
            <TreeRow key={name} $depth={2} $dim>
              <TreeSlot $width={10}><Expander /></TreeSlot>
              <Eye hidden />
              <TreeSlot $width={12}><Icon name={icon} size={13} /></TreeSlot>
              {name}
            </TreeRow>
          ))}
          <TreeRow $depth={2} $selected>
            <TreeSlot $width={10} />
            <Eye />
            <TreeSlot $width={12}><Icon name="draftTip" size={13} /></TreeSlot>
            Draft
          </TreeRow>
        </Tree>
        <Properties>
          <colgroup>
            <col width="16" />
            <col width="64" />
            <col />
          </colgroup>
          <tbody>
            {properties.map(([name, value], i) =>
              value === undefined ? (
                <tr key={i}>
                  <th colSpan={3}>{name}</th>
                </tr>
              ) : (
                <tr key={i}>
                  <td />
                  <td>{name}</td>
                  <td>{value}</td>
                </tr>
              ),
            )}
          </tbody>
        </Properties>
        <BottomTabs>
          <Tab>ビュー</Tab>
          <Tab $active>データ</Tab>
        </BottomTabs>
      </SidePanel>
      <View plate="#6e6f71" />
    </Body>
    <Status
      text="Preselected: ________.Body.Draft.Edge12 (50.00 mm, -33.39 mm,"
      area="Area: 100.00 cm^2"
      size="40 mm x 149.08"
      width={72}
    />
  </Window>
);

const EndCell = styled.div`
  padding-right: 3px;
`;

export default function App() {
  return (
    <Page>
      <Global />
      <Comparison>
        <Shot>
          <TaskWindow />
          <SelectionCallout $tail={24} $drop={17}>
            中立面をクリックしてから
            <br />
            立体形状の水色部を選択した場合
          </SelectionCallout>
        </Shot>
        <Shot>
          <ModelWindow />
          <EditCallout $tail={23} $drop={18}>Draftから編集できる</EditCallout>
        </Shot>
      </Comparison>
      <Caption>cosmosdesign2021.com</Caption>
    </Page>
  );
}
